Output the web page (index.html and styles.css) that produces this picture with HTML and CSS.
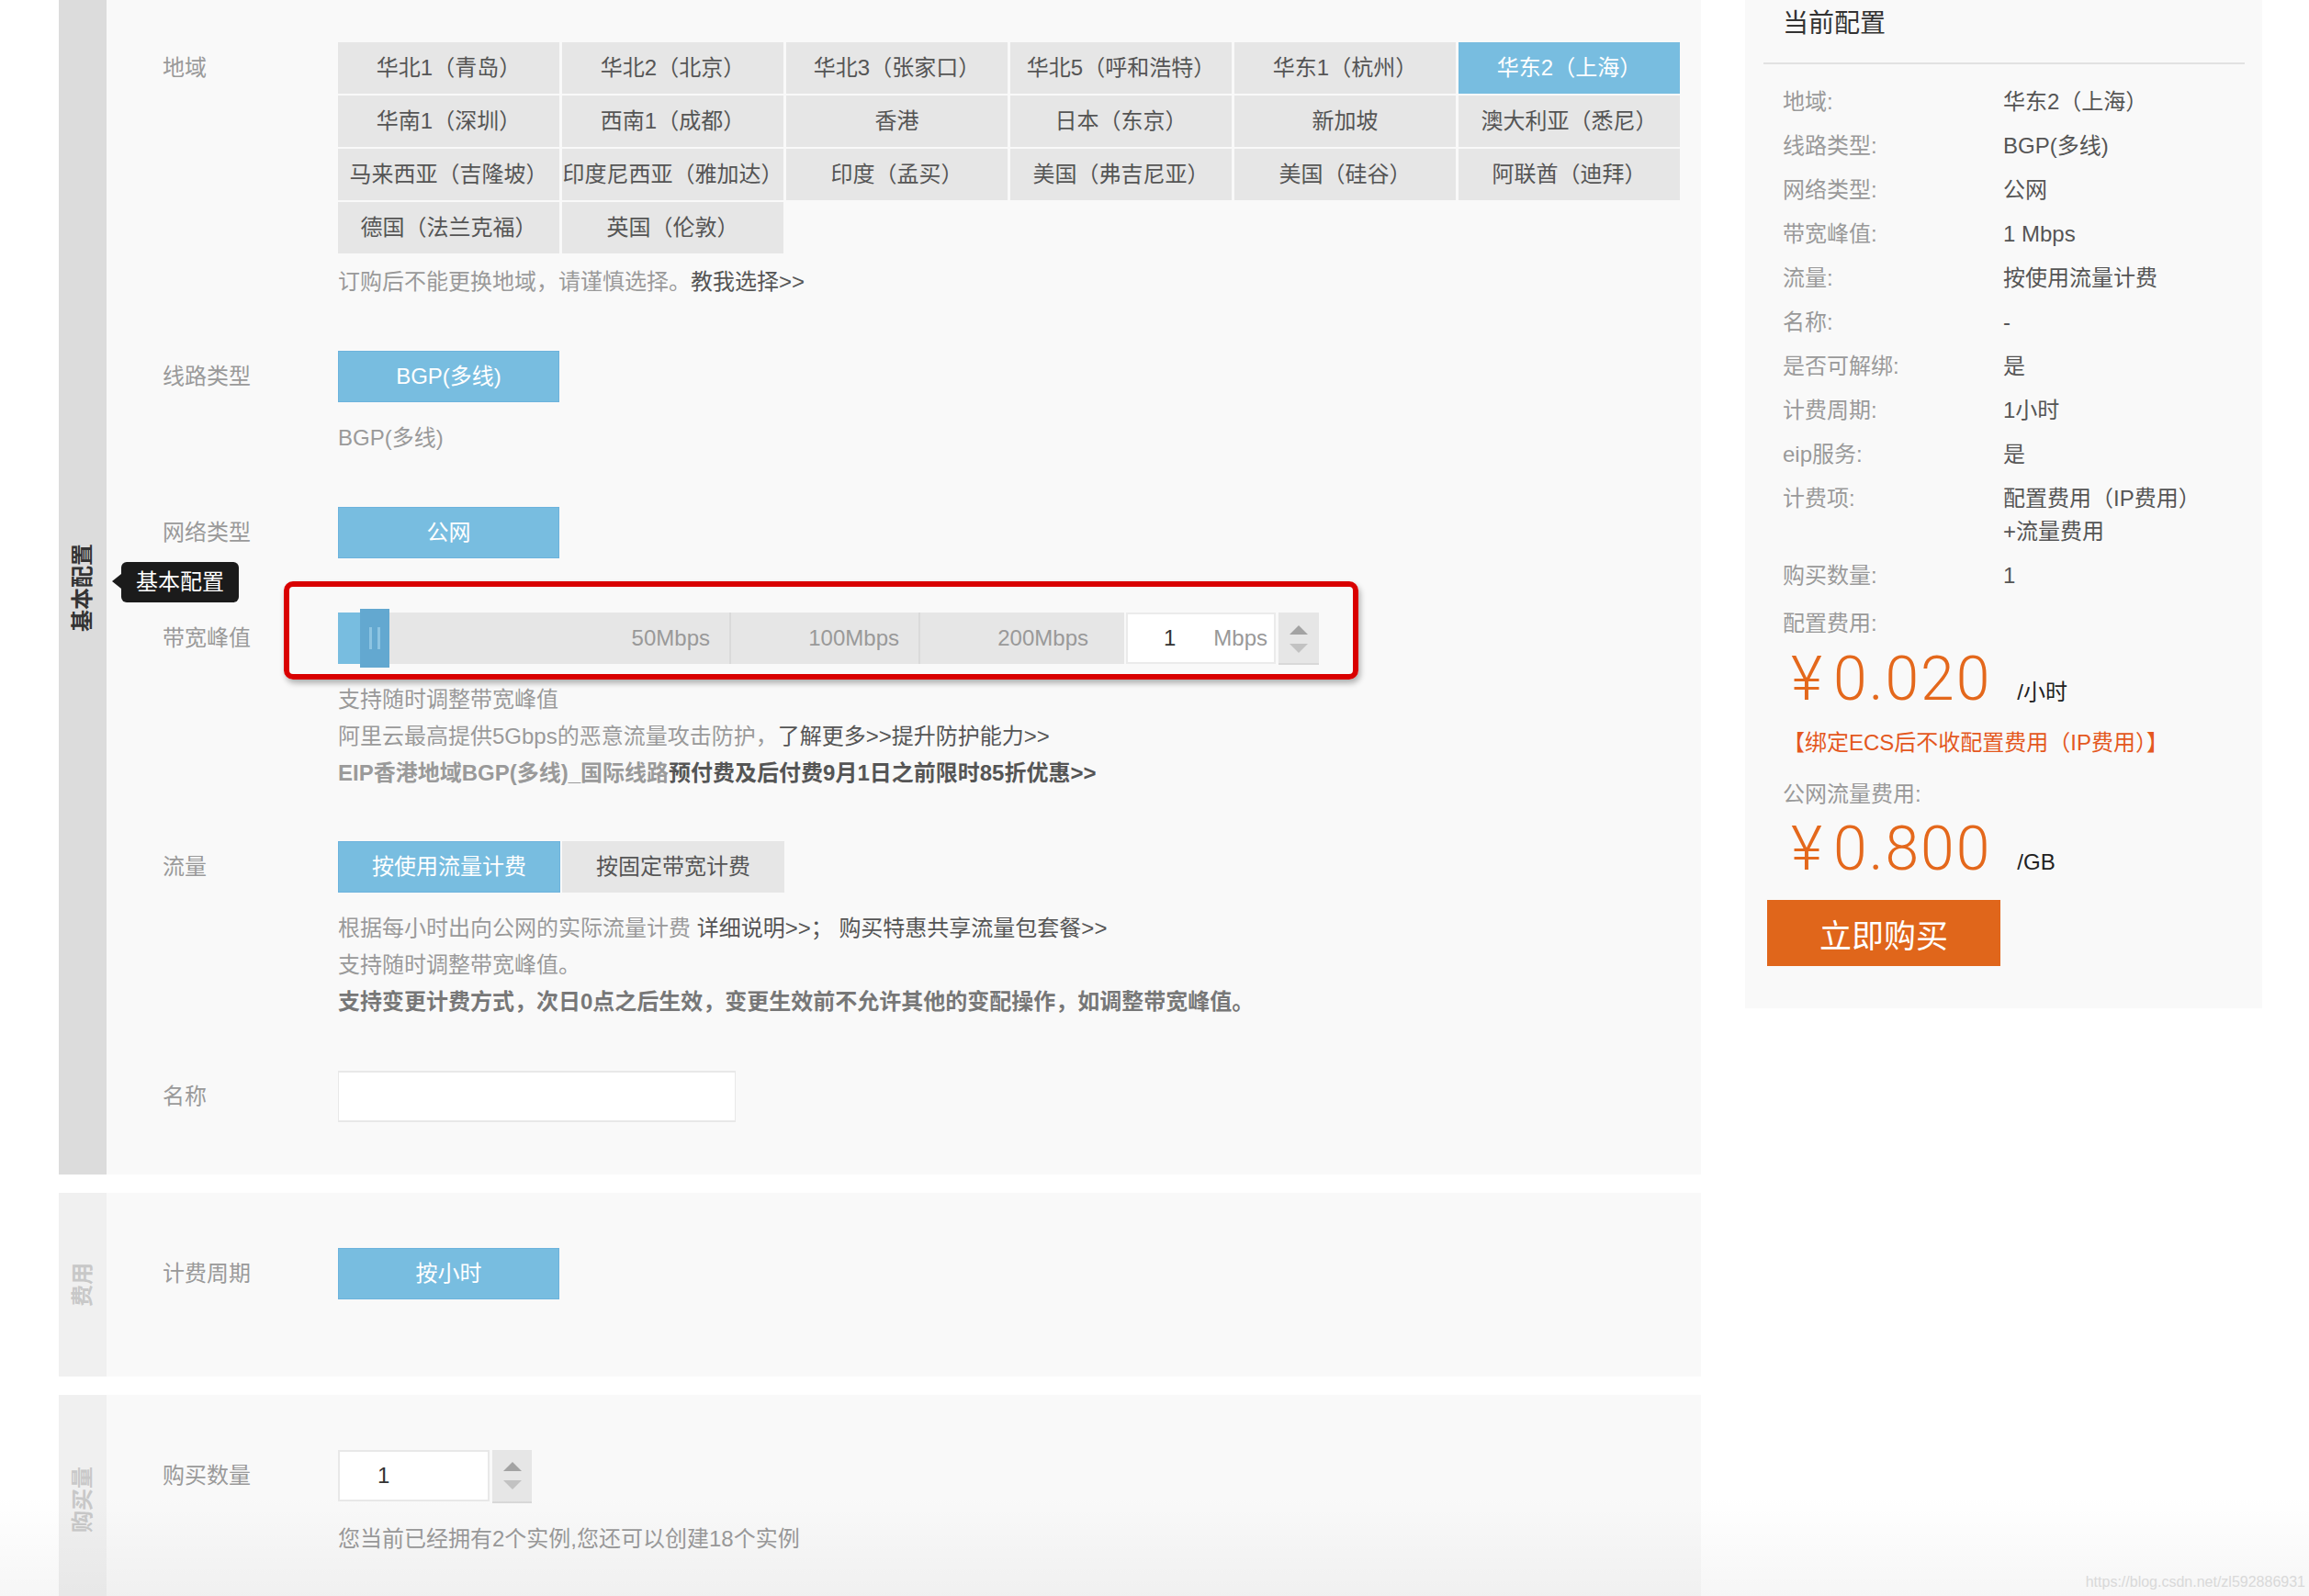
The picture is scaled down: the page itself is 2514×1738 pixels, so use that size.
FILE: index.html
```html
<!DOCTYPE html>
<html lang="zh-CN">
<head>
<meta charset="utf-8">
<title>弹性公网IP购买</title>
<link rel="stylesheet" href="styles.css">
</head>
<body>
<div class="page">
  <div class="main">
    <section class="sec sec-active">
      <div class="side"><span class="side-text">基本配置</span></div>
      <div class="body">
        <div class="row">
          <div class="label">地域</div>
          <div class="ctrl">
            <div class="regions">
              <div class="region">华北1（青岛）</div>
              <div class="region">华北2（北京）</div>
              <div class="region">华北3（张家口）</div>
              <div class="region">华北5（呼和浩特）</div>
              <div class="region">华东1（杭州）</div>
              <div class="region on">华东2（上海）</div>
              <div class="region">华南1（深圳）</div>
              <div class="region">西南1（成都）</div>
              <div class="region">香港</div>
              <div class="region">日本（东京）</div>
              <div class="region">新加坡</div>
              <div class="region">澳大利亚（悉尼）</div>
              <div class="region">马来西亚（吉隆坡）</div>
              <div class="region">印度尼西亚（雅加达）</div>
              <div class="region">印度（孟买）</div>
              <div class="region">美国（弗吉尼亚）</div>
              <div class="region">美国（硅谷）</div>
              <div class="region">阿联酋（迪拜）</div>
              <div class="region">德国（法兰克福）</div>
              <div class="region">英国（伦敦）</div>
            </div>
            <div class="help help-tight">订购后不能更换地域，请谨慎选择。<span class="link">教我选择&gt;&gt;</span></div>
          </div>
        </div>

        <div class="row">
          <div class="label">线路类型</div>
          <div class="ctrl">
            <div class="opt on">BGP(多线)</div>
            <div class="help">BGP(多线)</div>
          </div>
        </div>

        <div class="row">
          <div class="label">网络类型</div>
          <div class="ctrl">
            <div class="opt on">公网</div>
          </div>
        </div>

        <div class="row row-slider">
          <div class="label">带宽峰值</div>
          <div class="ctrl">
            <div class="slider">
              <div class="track">
                <div class="seg seg1">50Mbps</div>
                <div class="seg seg2">100Mbps</div>
                <div class="seg seg3">200Mbps</div>
                <div class="fill"></div>
                <div class="thumb"><i></i><i></i></div>
              </div>
              <div class="num"><span class="num-val">1</span><span class="num-unit">Mbps</span></div>
              <div class="spin"><span class="up"></span><span class="down"></span></div>
              <div class="mark"></div>
            </div>
            <div class="help help-slider">
              <div>支持随时调整带宽峰值</div>
              <div>阿里云最高提供5Gbps的恶意流量攻击防护，<span class="link">了解更多&gt;&gt;提升防护能力&gt;&gt;</span></div>
              <div class="strong">EIP香港地域BGP(多线)_国际线路<span class="link">预付费及后付费9月1日之前限时85折优惠&gt;&gt;</span></div>
            </div>
          </div>
        </div>

        <div class="row row-after-slider">
          <div class="label">流量</div>
          <div class="ctrl">
            <div class="opts">
              <div class="opt opt-w on">按使用流量计费</div>
              <div class="opt opt-w">按固定带宽计费</div>
            </div>
            <div class="help">
              <div>根据每小时出向公网的实际流量计费 <span class="link">详细说明&gt;&gt;；</span> <span class="link">购买特惠共享流量包套餐&gt;&gt;</span></div>
              <div>支持随时调整带宽峰值。</div>
              <div class="strong dark">支持变更计费方式，次日0点之后生效，变更生效前不允许其他的变配操作，如调整带宽峰值。</div>
            </div>
          </div>
        </div>

        <div class="row">
          <div class="label">名称</div>
          <div class="ctrl">
            <div class="text-input"></div>
          </div>
        </div>
      </div>
      <div class="tip">基本配置</div>
    </section>

    <section class="sec sec-fee">
      <div class="side"><span class="side-text">费用</span></div>
      <div class="body">
        <div class="row">
          <div class="label">计费周期</div>
          <div class="ctrl">
            <div class="opt on">按小时</div>
          </div>
        </div>
      </div>
    </section>

    <section class="sec sec-qty">
      <div class="side"><span class="side-text">购买量</span></div>
      <div class="body">
        <div class="row">
          <div class="label">购买数量</div>
          <div class="ctrl">
            <div class="qty">
              <div class="qty-input">1</div>
              <div class="spin spin-qty"><span class="up"></span><span class="down"></span></div>
            </div>
            <div class="help help-qty">您当前已经拥有2个实例,您还可以创建18个实例</div>
          </div>
        </div>
      </div>
    </section>
  </div>

  <aside class="summary">
    <h2 class="sum-title">当前配置</h2>
    <dl class="sum-list">
      <div class="sum-row"><dt>地域:</dt><dd>华东2（上海）</dd></div>
      <div class="sum-row"><dt>线路类型:</dt><dd>BGP(多线)</dd></div>
      <div class="sum-row"><dt>网络类型:</dt><dd>公网</dd></div>
      <div class="sum-row"><dt>带宽峰值:</dt><dd>1 Mbps</dd></div>
      <div class="sum-row"><dt>流量:</dt><dd>按使用流量计费</dd></div>
      <div class="sum-row"><dt>名称:</dt><dd>-</dd></div>
      <div class="sum-row"><dt>是否可解绑:</dt><dd>是</dd></div>
      <div class="sum-row"><dt>计费周期:</dt><dd>1小时</dd></div>
      <div class="sum-row"><dt>eip服务:</dt><dd>是</dd></div>
      <div class="sum-row"><dt>计费项:</dt><dd>配置费用（IP费用）<br>+流量费用</dd></div>
      <div class="sum-row"><dt>购买数量:</dt><dd>1</dd></div>
    </dl>
    <div class="fee-label">配置费用:</div>
    <div class="price"><span class="amt"><span class="yen">¥</span>0.020</span><span class="unit">/小时</span></div>
    <div class="fee-note">【绑定ECS后不收配置费用（IP费用）】</div>
    <div class="fee-label fee-label-2">公网流量费用:</div>
    <div class="price price-2"><span class="amt"><span class="yen">¥</span>0.800</span><span class="unit">/GB</span></div>
    <button class="buy" type="button">立即购买</button>
  </aside>
</div>
<div class="watermark">https://blog.csdn.net/zl592886931</div>
<div class="fade"></div>
</body>
</html>
```
FILE: styles.css
```css
html, body {
  margin: 0;
  padding: 0;
}
body {
  background: #fff;
  font-family: "Liberation Sans", "Noto Sans CJK SC", sans-serif;
  font-size: 24px;
  color: #555;
  width: 2514px;
  height: 1738px;
  overflow: hidden;
  position: relative;
}
.page {
  display: flex;
  align-items: flex-start;
  gap: 48px;
  padding-left: 64px;
}
.main {
  width: 1788px;
  flex-shrink: 0;
  display: flex;
  flex-direction: column;
  gap: 20px;
}
.sec {
  display: flex;
  background: #f9f9f9;
  position: relative;
}
.side {
  width: 52px;
  flex-shrink: 0;
  background: #f0f0f0;
  display: flex;
  align-items: center;
  justify-content: center;
}
.sec-active .side {
  background: #dcdcdc;
}
.side-text {
  writing-mode: vertical-rl;
  text-orientation: sideways;
  transform: rotate(180deg);
  font-weight: bold;
  font-size: 24px;
  line-height: 24px;
  color: #c8c8c8;
}
.sec-active .side-text {
  color: #333;
}
.body {
  flex: 1;
  padding: 46px 0 57px 61px;
}
.sec-fee .body {
  padding: 60px 0 84px 61px;
}
.sec-qty .body {
  padding: 60px 0 51px 61px;
}
.row {
  display: flex;
}
.row + .row {
  margin-top: 55px;
}
.row + .row-after-slider {
  margin-top: 54px;
}
.label {
  width: 191px;
  flex-shrink: 0;
  line-height: 56px;
  color: #9a9a9a;
}
.row-slider .label {
  line-height: 64px;
}
.ctrl {
  flex: 0 0 auto;
}

/* regions */
.regions {
  display: grid;
  grid-template-columns: repeat(6, 241px);
  column-gap: 3px;
  row-gap: 2px;
}
.region {
  height: 56px;
  line-height: 56px;
  text-align: center;
  background: #e6e6e6;
  color: #555;
  white-space: nowrap;
}
.region.on {
  background: #78bde0;
  color: #fff;
}

/* help text */
.help {
  margin-top: 19px;
  line-height: 40px;
  color: #9a9a9a;
}
.help-tight {
  margin-top: 11px;
}
.help-slider {
  margin-top: 15px;
}
.help .link {
  color: #555;
}
.help .strong {
  font-weight: bold;
}
.help .strong.dark {
  color: #777;
}

/* option buttons */
.opt {
  width: 241px;
  height: 56px;
  line-height: 56px;
  box-sizing: border-box;
  text-align: center;
  background: #e6e6e6;
  color: #555;
}
.opt.on {
  background: #78bde0;
  color: #fff;
  border: 1px solid #6db3dd;
  line-height: 54px;
}
.opts {
  display: flex;
  gap: 2px;
}
.opt-w {
  width: 242px;
}

/* slider */
.slider {
  display: flex;
  align-items: flex-start;
  height: 64px;
  position: relative;
}
.track {
  position: relative;
  display: flex;
  width: 856px;
  height: 56px;
  margin-top: 4px;
  background: #e6e6e6;
}
.seg {
  box-sizing: border-box;
  height: 56px;
  line-height: 56px;
  text-align: right;
  color: #999;
  padding-right: 21px;
}
.seg1 {
  width: 428px;
  border-right: 2px solid #dadada;
}
.seg2 {
  width: 206px;
  border-right: 2px solid #dadada;
}
.seg3 {
  flex: 1;
  padding-right: 39px;
}
.fill {
  position: absolute;
  left: 0;
  top: 0;
  width: 40px;
  height: 56px;
  background: #78bde0;
}
.thumb {
  position: absolute;
  left: 24px;
  top: -4px;
  width: 32px;
  height: 64px;
  background: #63a8d0;
  display: flex;
  justify-content: center;
  align-items: center;
  gap: 6px;
}
.thumb i {
  display: block;
  width: 3px;
  height: 24px;
  background: #8dc4e2;
}
.num {
  box-sizing: border-box;
  width: 163px;
  height: 56px;
  margin: 4px 0 0 2px;
  background: #fff;
  border: 2px solid #ebebeb;
  display: flex;
  line-height: 52px;
}
.num-val {
  padding-left: 39px;
  color: #333;
}
.num-unit {
  margin-left: auto;
  padding-right: 7px;
  color: #999;
}
.spin {
  box-sizing: border-box;
  width: 44px;
  height: 57px;
  margin: 4px 0 0 3px;
  background: #e6e6e6;
  border-bottom: 2px solid #d8d8d8;
  display: flex;
  flex-direction: column;
  align-items: center;
  padding-top: 14px;
  gap: 10px;
}
.spin .up {
  width: 0;
  height: 0;
  border-left: 10px solid transparent;
  border-right: 10px solid transparent;
  border-bottom: 10px solid #a3a3a3;
}
.spin .down {
  width: 0;
  height: 0;
  border-left: 10px solid transparent;
  border-right: 10px solid transparent;
  border-top: 10px solid #c2c2c2;
}
.mark {
  position: absolute;
  left: -59px;
  top: -30px;
  width: 1170px;
  height: 107px;
  box-sizing: border-box;
  border: 6px solid #d90000;
  border-radius: 10px;
  box-shadow: 2px 4px 6px rgba(0, 0, 0, 0.3);
  pointer-events: none;
}

/* text input */
.text-input {
  box-sizing: border-box;
  width: 433px;
  height: 56px;
  background: #fff;
  border: 2px solid #e8e8e8;
  border-left-width: 1px;
  border-right-width: 1px;
}

/* quantity */
.qty {
  display: flex;
  align-items: flex-start;
}
.qty-input {
  box-sizing: border-box;
  width: 165px;
  height: 56px;
  background: #fff;
  border: 2px solid #e8e8e8;
  padding-left: 41px;
  line-height: 52px;
  color: #333;
}
.spin-qty {
  width: 43px;
  height: 58px;
  margin: 0 0 0 3px;
  padding-top: 13px;
}
.help-qty {
  margin-top: 19px;
}

/* tooltip */
.tip {
  position: absolute;
  left: 68px;
  top: 612px;
  height: 44px;
  line-height: 44px;
  padding: 0 16px;
  background: #1b1b1b;
  color: #fff;
  border-radius: 6px;
  white-space: nowrap;
}
.tip::before {
  content: "";
  position: absolute;
  left: -10px;
  top: 13px;
  border-top: 8px solid transparent;
  border-bottom: 8px solid transparent;
  border-right: 10px solid #1b1b1b;
}

/* summary */
.summary {
  width: 563px;
  flex-shrink: 0;
  box-sizing: border-box;
  background: #f9f9f9;
  padding: 0 19px 46px 20px;
}
.sum-title {
  margin: 0;
  font-size: 28px;
  font-weight: normal;
  color: #333;
  line-height: 52px;
  padding: 0 0 16px 21px;
  border-bottom: 2px solid #e2e2e2;
}
.sum-list {
  margin: 17px 0 0;
  padding: 0;
}
.sum-row {
  display: flex;
  padding: 6px 0 6px 21px;
  line-height: 36px;
}
.sum-row dt {
  width: 240px;
  flex-shrink: 0;
  color: #9a9a9a;
}
.sum-row dd {
  margin: 0;
  color: #555;
}
.fee-label {
  margin-top: 10px;
  padding-left: 21px;
  line-height: 36px;
  color: #9a9a9a;
}
.fee-label-2 {
  margin-top: 20px;
}
.price {
  margin-top: 7px;
  padding-left: 30px;
  line-height: 72px;
  height: 72px;
  white-space: nowrap;
}
.price-2 {
  margin-top: 6px;
}
.amt {
  font-family: Roboto, "Liberation Sans", sans-serif;
  font-weight: 300;
  font-size: 66px;
  letter-spacing: 2px;
  color: #e4681c;
}
.yen {
  margin-right: 10px;
}
.unit {
  margin-left: 28px;
  font-size: 24px;
  color: #222;
}
.fee-note {
  margin-top: 15px;
  padding-left: 21px;
  line-height: 36px;
  color: #e4581e;
}
.buy {
  display: block;
  margin: 19px 0 0 4px;
  width: 254px;
  height: 72px;
  border: 0;
  padding: 0;
  background: #e0661b;
  color: #fff;
  font-family: "Liberation Sans", "Noto Sans CJK SC", sans-serif;
  font-size: 35px;
}

/* screenshot artefacts */
.watermark {
  position: absolute;
  right: 4px;
  bottom: 6px;
  font-size: 16px;
  color: #e0e0e0;
}
.fade {
  position: absolute;
  left: 0;
  right: 0;
  bottom: 0;
  height: 110px;
  background: linear-gradient(to bottom, rgba(0, 0, 0, 0), rgba(0, 0, 0, 0.035));
  pointer-events: none;
}
```
